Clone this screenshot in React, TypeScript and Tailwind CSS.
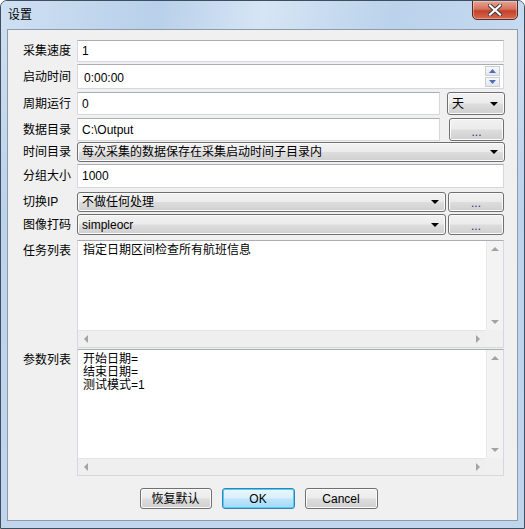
import React from 'react';

const btnBg =
  'bg-[linear-gradient(#f2f2f2_0%,#ebebeb_48%,#dddddd_52%,#cfcfcf_100%)] border border-[#707070] rounded-[3px] shadow-[inset_0_0_0_1px_#fbfbfb]';

function TriDown({ className = '' }: { className?: string }) {
  return (
    <svg width="8" height="4" viewBox="0 0 8 4" className={className}>
      <path d="M0 0H8L4 4Z" fill="#000" />
    </svg>
  );
}

function Arrow({ dir }: { dir: 'up' | 'down' | 'left' | 'right' }) {
  const d = {
    up: 'M0 4L4 0L8 4Z',
    down: 'M0 0H8L4 4Z',
    left: 'M4 0V8L0 4Z',
    right: 'M0 0V8L4 4Z',
  }[dir];
  const v = dir === 'up' || dir === 'down';
  return (
    <svg width={v ? 8 : 4} height={v ? 4 : 8} viewBox={v ? '0 0 8 4' : '0 0 4 8'}>
      <path d={d} fill="#a3a3a3" />
    </svg>
  );
}

function TextBox({ children, className = '' }: { children?: React.ReactNode; className?: string }) {
  return (
    <div
      className={`relative flex items-center h-full bg-white border border-[#d5d8de] border-t-[#abadb3] pl-[4px] text-[12px] text-black ${className}`}
    >
      {children}
    </div>
  );
}

function Combo({ text, className = '' }: { text: string; className?: string }) {
  return (
    <div className={`flex items-center h-full pl-[4px] pr-[6px] text-[12px] ${btnBg} ${className}`}>
      <span className="flex-1 truncate">{text}</span>
      <TriDown />
    </div>
  );
}

function DotsButton({ className = '' }: { className?: string }) {
  return (
    <div className={`flex items-end justify-center pb-[2px] h-full text-[12px] leading-[12px] text-[#3a2a7a] ${btnBg} ${className}`}>
      ...
    </div>
  );
}

function Label({ children, top = false }: { children: React.ReactNode; top?: boolean }) {
  return (
    <div className={`w-[54px] shrink-0 text-[12px] leading-[14px] text-black ${top ? 'self-start pt-[4px]' : ''}`}>
      {children}
    </div>
  );
}

function ScrollArea({ lines, className = '', textTop = 'pt-[4px]' }: { lines: string[]; className?: string; textTop?: string }) {
  return (
    <div className={`flex flex-col flex-1 h-full bg-white border border-[#d5d8de] border-t-[#abadb3] ${className}`}>
      <div className="flex flex-1 min-h-0">
        <div className={`flex-1 pl-[5px] ${textTop} text-[12px] leading-[13px] text-black`}>
          {lines.map((l, i) => (
            <div key={i}>{l}</div>
          ))}
        </div>
        <div className="w-[17px] flex flex-col justify-between items-center bg-[#f3f3f3] border-l border-[#e8e8e8] py-[6px]">
          <Arrow dir="up" />
          <Arrow dir="down" />
        </div>
      </div>
      <div className="flex h-[17px] shrink-0">
        <div className="flex-1 flex items-center justify-between px-[6px] bg-[#efefef] border-t border-[#e4e4e4]">
          <Arrow dir="left" />
          <Arrow dir="right" />
        </div>
        <div className="w-[17px] bg-[#f0f0f0]" />
      </div>
    </div>
  );
}

export default function App() {
  return (
    <div className="w-[525px] h-[529px] font-['Liberation_Sans','Noto_Sans_CJK_SC',sans-serif] bg-white">
      <div className="relative w-[525px] h-[529px] rounded-t-[7px] border border-[#3f4e5e] bg-[linear-gradient(180deg,#cfdff0_0%,#bcd3ec_40%,#c1d6ed_100%)] flex flex-col overflow-hidden">
        <div className="h-[28px] shrink-0 flex items-center pl-[7px] bg-[linear-gradient(100deg,#cfe0f2_0%,#b8d0ea_30%,#d6e5f4_50%,#bad2eb_75%,#c6daf0_100%)]">
          <span className="text-[12px] text-black">设置</span>
        </div>
        <div className="absolute right-[6px] top-[-1px] w-[46px] h-[20px] rounded-b-[5px] border border-[#5a2a22] bg-[linear-gradient(#e8a493_0%,#d4735d_45%,#c5412a_55%,#d46b4f_100%)] flex items-center justify-center shadow-[inset_0_0_0_1px_rgba(255,255,255,0.35)]">
          <svg width="14" height="12" viewBox="0 0 14 12">
            <path d="M2 1.5L12 10.5M12 1.5L2 10.5" stroke="#3a3a3a" strokeWidth="4" strokeLinecap="square" />
            <path d="M2 1.5L12 10.5M12 1.5L2 10.5" stroke="#fff" strokeWidth="2.2" strokeLinecap="square" />
          </svg>
        </div>

        <div className="ml-[6px] mr-[6px] mb-[7px] flex-1 bg-[#f0f0f0] border border-[#8c9aa9] flex flex-col pt-[10px] pl-[15px] pr-[13px]">
          {/* 采集速度 */}
          <div className="flex items-center h-[22px]">
            <Label>采集速度</Label>
            <TextBox className="flex-1">1</TextBox>
          </div>
          {/* 启动时间 */}
          <div className="flex items-center h-[25px] mt-[2px]">
            <Label>启动时间</Label>
            <TextBox className="flex-1">
              <span className="pl-[2px] pt-[2px]">0:00:00</span>
              <div className="absolute right-[3px] top-[1px] flex flex-col gap-[1px]">
                <div className="w-[15px] h-[10px] border border-[#c9cfd6] bg-[linear-gradient(#f8f8f8,#e6e6e6)] flex items-center justify-center">
                  <svg width="7" height="4" viewBox="0 0 7 4"><path d="M0 4L3.5 0L7 4Z" fill="#4a6fc0" /></svg>
                </div>
                <div className="w-[15px] h-[10px] border border-[#c9cfd6] bg-[linear-gradient(#f8f8f8,#e6e6e6)] flex items-center justify-center">
                  <svg width="7" height="4" viewBox="0 0 7 4"><path d="M0 0H7L3.5 4Z" fill="#4a6fc0" /></svg>
                </div>
              </div>
            </TextBox>
          </div>
          {/* 周期运行 */}
          <div className="flex items-center h-[23px] mt-[3px]">
            <Label>周期运行</Label>
            <TextBox className="flex-1">0</TextBox>
            <Combo text="天" className="w-[58px] ml-[7px] -mr-[1px]" />
          </div>
          {/* 数据目录 */}
          <div className="flex items-center h-[23px] mt-[3px]">
            <Label>数据目录</Label>
            <TextBox className="flex-1">C:\Output</TextBox>
            <DotsButton className="w-[55px] ml-[9px] h-[22px]" />
          </div>
          {/* 时间目录 */}
          <div className="flex items-center h-[20px] mt-[1px]">
            <Label>时间目录</Label>
            <Combo text="每次采集的数据保存在采集启动时间子目录内" className="flex-1 -mr-[1px]" />
          </div>
          {/* 分组大小 */}
          <div className="flex items-center h-[24px] mt-[2px]">
            <Label>分组大小</Label>
            <TextBox className="flex-1">1000</TextBox>
          </div>
          {/* 切换IP */}
          <div className="flex items-center h-[20px] mt-[4px]">
            <Label>切换IP</Label>
            <Combo text="不做任何处理" className="flex-1" />
            <DotsButton className="w-[56px] ml-[2px] h-[21px]" />
          </div>
          {/* 图像打码 */}
          <div className="flex items-center h-[21px] mt-[2px]">
            <Label>图像打码</Label>
            <Combo text="simpleocr" className="flex-1" />
            <DotsButton className="w-[56px] ml-[2px] h-[21px]" />
          </div>
          {/* 任务列表 */}
          <div className="flex h-[108px] mt-[5px]">
            <Label top>任务列表</Label>
            <ScrollArea lines={['指定日期区间检查所有航班信息']} textTop="pt-[3px]" />
          </div>
          {/* 参数列表 */}
          <div className="flex h-[127px] mt-[1px]">
            <Label top>参数列表</Label>
            <ScrollArea lines={['开始日期=', '结束日期=', '测试模式=1']} textTop="pt-[3px]" />
          </div>
          {/* buttons */}
          <div className="flex justify-center gap-[10px] mt-[12px] pr-[10px] text-[12px]">
            <div className={`w-[72px] h-[21px] flex items-center justify-center ${btnBg}`}>恢复默认</div>
            <div className="w-[73px] h-[21px] flex items-center justify-center rounded-[3px] border border-[#3c7fb1] bg-[linear-gradient(#eaf6fd_0%,#d9f0fc_48%,#bee6fd_52%,#a7d9f5_100%)] shadow-[inset_0_0_0_1px_#48d1f9]">
              OK
            </div>
            <div className={`w-[73px] h-[21px] flex items-center justify-center ${btnBg}`}>Cancel</div>
          </div>
        </div>
      </div>
    </div>
  );
}
